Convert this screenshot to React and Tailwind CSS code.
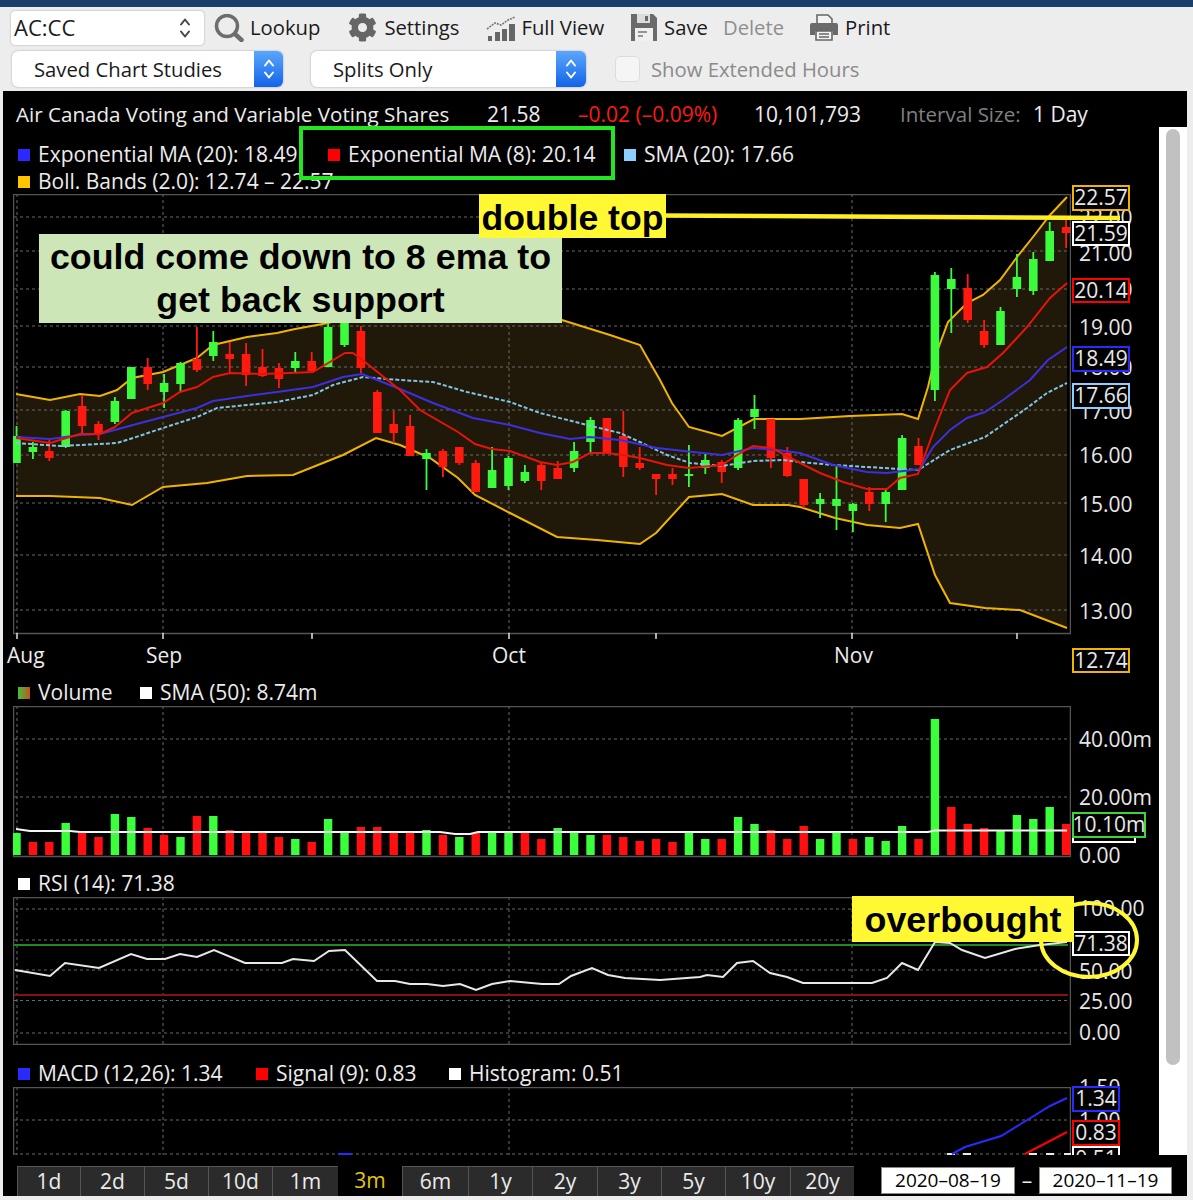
import React from 'react';
import { FaCog } from 'react-icons/fa';

const G = '#3cfb3c';
const R = '#ff1a0f';

// wick top, wick bottom, body top, body bottom, colour
const candles = [
  [426, 463, 436, 463, G], [442, 459, 447, 452, G], [440, 461, 451, 458, R], [410, 448, 411, 447, G],
  [395, 433, 406, 426, R], [421, 440, 424, 433, R], [397, 424, 401, 422, G], [367, 399, 367, 399, G],
  [358, 390, 367, 384, R], [374, 408, 383, 392, G], [362, 392, 363, 384, G], [327, 372, 359, 370, R],
  [331, 361, 342, 356, G], [342, 373, 354, 359, R], [343, 386, 354, 375, R], [349, 377, 367, 376, R],
  [363, 388, 368, 379, R], [352, 372, 361, 368, G], [352, 372, 361, 371, R], [323, 367, 327, 367, G],
  [320, 347, 323, 345, G], [326, 373, 331, 368, R], [390, 433, 392, 433, R], [411, 443, 424, 433, R],
  [415, 456, 426, 456, R], [449, 490, 453, 459, G], [449, 477, 451, 467, R], [447, 465, 447, 463, R],
  [460, 492, 463, 492, R], [447, 488, 470, 488, G], [456, 490, 458, 486, G], [465, 483, 472, 481, G],
  [463, 490, 465, 481, R], [461, 479, 468, 479, R], [442, 472, 451, 468, G], [417, 453, 420, 442, G],
  [418, 453, 418, 453, R], [411, 477, 436, 467, R], [447, 470, 463, 468, R], [474, 495, 474, 479, R],
  [468, 485, 474, 479, R], [445, 487, 474, 476, G], [454, 474, 460, 468, G], [460, 483, 462, 472, R],
  [418, 470, 420, 468, G], [395, 429, 409, 417, G], [419, 468, 419, 458, R], [447, 477, 453, 476, R],
  [479, 508, 479, 505, R], [493, 518, 499, 504, G], [465, 530, 499, 506, G], [503, 532, 504, 511, G],
  [487, 511, 492, 504, R], [490, 522, 492, 504, G], [435, 490, 438, 490, G], [438, 465, 446, 465, R],
  [272, 401, 275, 390, G], [268, 333, 279, 289, G], [274, 323, 288, 320, R], [320, 348, 331, 345, R],
  [307, 345, 311, 345, G], [254, 297, 277, 289, G], [252, 295, 259, 291, G], [222, 261, 231, 261, G],
  [220, 248, 227, 233, R],
];

const volumes = [
  [833, G], [842, R], [842, R], [823, G], [833, R], [837, R], [814, G], [817, G], [828, R], [835, R], [837, G],
  [816, R], [816, G], [830, R], [833, R], [833, R], [837, R], [839, G], [842, R], [819, G], [833, G], [827, R],
  [827, R], [833, R], [833, R], [830, G], [835, R], [837, G], [833, R], [833, G], [833, G], [833, R], [839, R],
  [828, G], [833, G], [835, G], [835, R], [837, R], [841, R], [839, R], [842, R], [833, G], [839, G], [839, R],
  [817, G], [824, G], [830, R], [839, R], [826, R], [839, G], [833, G], [839, R], [837, G], [841, G], [826, G],
  [839, R], [719, G], [807, R], [824, R], [828, R], [831, G], [815, G], [819, G], [807, G], [824, R],
];

const upperBand = '16,394 50,400 80,394 100,396 117,390 132,378 163,372 197,358 213,345 247,337 277,333 295,329 328,323 345,318 380,315 450,315 562,320 610,335 640,345 660,380 672,403 689,427 722,436 754,419 800,419 850,416 902,414 918,419 928,387 935,357 948,322 967,303 983,295 1000,280 1017,257 1033,237 1050,215 1067,197';
const lowerBand = '16,496 50,496 100,498 132,505 163,487 207,483 247,476 293,475 343,455 376,438 400,445 430,458 458,478 475,495 510,513 557,537 597,540 640,544 656,533 689,497 722,494 753,505 788,505 800,507 835,518 867,525 900,528 918,524 935,575 950,603 985,608 1020,610 1067,628';
const ema8 = '16,438 50,443 80,434 100,434 115,427 132,413 163,403 180,392 197,387 213,377 230,373 260,374 290,373 313,372 345,353 353,353 365,362 400,390 420,410 458,432 475,444 492,449 510,451 540,462 557,465 573,462 590,453 607,453 623,455 640,458 667,465 689,468 722,465 737,455 753,446 772,448 800,463 820,473 843,482 867,489 887,489 900,478 918,474 933,433 950,390 967,373 987,367 1003,353 1027,327 1050,298 1067,283';
const ema20 = '16,437 50,439 80,435 100,434 133,425 163,417 197,408 213,401 247,396 277,392 313,387 343,377 362,374 400,389 433,403 473,418 510,425 540,433 570,439 590,437 620,440 657,448 693,452 722,455 753,448 777,450 800,453 833,465 867,472 887,473 920,469 933,447 950,430 967,418 985,412 1003,400 1030,380 1048,360 1067,347';
const sma20 = '16,443 60,446 100,444 117,443 133,438 163,428 197,417 217,408 247,405 277,402 313,395 333,385 363,377 400,380 433,382 467,392 510,402 540,413 587,425 620,433 640,442 667,455 690,463 722,466 753,461 783,460 800,462 833,465 867,467 918,470 950,450 985,437 1027,408 1047,393 1067,383';
const rsi = '15,970 50,976 65,963 99,968 131,954 147,959 165,959 180,954 197,957 214,950 245,963 282,963 293,959 314,961 329,951 345,950 377,981 395,981 410,984 427,984 443,986 460,984 476,990 492,984 510,981 542,984 559,984 571,976 592,968 608,975 625,978 660,980 700,977 707,975 723,977 737,963 753,961 770,973 787,977 803,983 872,983 887,978 902,963 918,970 935,942 950,943 962,950 985,958 1015,949 1040,945 1067,942';

const candleX = (i) => 16.5 + 16.4 * i;

const tabs = [
  ['1d', 'w-[63px]'], ['2d', 'w-[64px]'], ['5d', 'w-[64px]'], ['10d', 'w-[64px]'], ['1m', 'w-[66px]'],
  ['3m', 'w-[64px]'], ['6m', 'w-[66px]'], ['1y', 'w-[64px]'], ['2y', 'w-[65px]'], ['3y', 'w-[64px]'],
  ['5y', 'w-[64px]'], ['10y', 'w-[65px]'], ['20y', 'w-[64px]'],
];

function Grid({ xs, ys, top, bottom }) {
  return (
    <g stroke="#6a6a6a" strokeWidth="1" strokeDasharray="3 3">
      {ys.map((y) => <line key={y} x1="14" x2="1070" y1={y} y2={y} />)}
      {xs.map((x) => <line key={x} x1={x} x2={x} y1={top} y2={bottom} />)}
    </g>
  );
}

function Legend({ color, className = '', children }) {
  return (
    <div className={`flex items-center gap-2 shrink-0 ${className}`}>
      <span className="w-3 h-3 shrink-0" style={{ background: color }} />
      <span>{children}</span>
    </div>
  );
}

function AxisLabel({ className, children }) {
  return <div className={`absolute left-2 leading-none -translate-y-1/2 text-[#e8e8e8] ${className}`}>{children}</div>;
}

function Tag({ className, children }) {
  return (
    <div className={`absolute left-px w-[58px] flex items-center justify-center bg-black border-2 text-[#e8e8e8] ${className}`}>
      {children}
    </div>
  );
}

function UpDown({ className }) {
  return (
    <svg viewBox="0 0 12 22" className={className} fill="none" stroke="currentColor" strokeWidth="2" strokeLinecap="round" strokeLinejoin="round">
      <path d="M2 7.5 6 2.5l4 5M2 14.5l4 5 4-5" />
    </svg>
  );
}

function SelectBox({ className, blue, children }) {
  return (
    <div className={`h-9 flex items-center justify-between bg-white rounded-md shadow-[0_0_2px_rgba(0,0,0,0.35)] overflow-hidden ${className}`}>
      <span className="pl-[22px]">{children}</span>
      <div className={`h-full flex items-center justify-center bg-gradient-to-b from-[#5aa6fb] to-[#1262e8] text-white ${blue}`}>
        <UpDown className="w-3 h-[24px]" />
      </div>
    </div>
  );
}

export default function App() {
  return (
    <div className="relative w-[1193px] h-[1200px] overflow-hidden bg-[#ededed] font-['Open_Sans',sans-serif]">
      <div className="h-[7px] bg-[#1a3f6b]" />

      {/* Toolbar */}
      <div className="h-[41px] flex items-center text-[20.25px] text-[#1a1a1a]">
        <div className="ml-[11px] w-[193px] h-[34px] flex items-center justify-between bg-white rounded-[4px] shadow-[0_0_2px_rgba(0,0,0,0.35)]">
          <span className="pl-[3px] text-[22px]">AC:CC</span>
          <UpDown className="w-3 h-[24px] mr-[13px] text-[#444]" />
        </div>
        <svg viewBox="0 0 30 28" className="ml-[10px] w-[30px] h-[28px]" fill="none" stroke="#6d6d6d">
          <circle cx="13" cy="12" r="10.5" strokeWidth="3.5" />
          <path d="M21 20l6.5 6" strokeWidth="4.5" strokeLinecap="round" />
        </svg>
        <span className="ml-[6px]">Lookup</span>
        <FaCog className="ml-[28px] text-[#666]" size={29} />
        <span className="ml-[7px]">Settings</span>
        <svg viewBox="0 0 30 26" className="ml-[27px] w-[30px] h-[26px]" fill="none">
          <path d="M1 14 9 8l6 2 7-5 7-3" stroke="#777" strokeWidth="1.6" strokeDasharray="2 1" />
          <path d="M2 26v-5h4v5zM9 26v-9h5v9zM16 26v-12h5v12zM23 26V9h6v17z" fill="#666" />
        </svg>
        <span className="ml-[5px]">Full View</span>
        <svg viewBox="0 0 28 29" className="ml-[26px] w-[28px] h-[29px]">
          <path d="M1 1h22l4 4v23H1z" fill="#6a6a6a" />
          <path d="M7 1h13v9H7z" fill="#dcdcdc" />
          <path d="M15 3h3v5h-3z" fill="#6a6a6a" />
          <path d="M5 15h18v13H5z" fill="#f0f0f0" />
          <path d="M8 19h9M8 23h5" stroke="#777" strokeWidth="1.5" />
        </svg>
        <span className="ml-[6px]">Save</span>
        <span className="ml-[15px] text-[#8f8f8f]">Delete</span>
        <svg viewBox="0 0 30 27" className="ml-[25px] w-[30px] h-[27px]">
          <path d="M8 1h11l4 4v6H8z" fill="#f2f2f2" stroke="#666" strokeWidth="1.6" />
          <path d="M1 11a2 2 0 0 1 2-2h24a2 2 0 0 1 2 2v10h-5v-4H6v4H1z" fill="#6a6a6a" />
          <path d="M7 17h16v9H7z" fill="#f2f2f2" stroke="#666" strokeWidth="1.6" />
          <path d="M10 20h10M10 23h10" stroke="#666" strokeWidth="1.4" />
        </svg>
        <span className="ml-[6px]">Print</span>
      </div>
      <div className="h-[43px] pb-px flex items-center text-[20.25px] text-[#1a1a1a]">
        <SelectBox className="ml-3 w-[271px]" blue="w-[29px]">Saved Chart Studies</SelectBox>
        <SelectBox className="ml-7 w-[275px]" blue="w-[30px]">Splits Only</SelectBox>
        <div className="ml-[29px] w-[25px] h-[26px] bg-[#f5f5f5] border border-[#dcdcdc] rounded-[5px]" />
        <span className="ml-[11px] text-[#8a8a8a]">Show Extended Hours</span>
      </div>

      {/* Chart panel */}
      <div className="ml-[3px] w-[1184px] h-[1105px] bg-black text-[21px] text-[#ececec] flex flex-col">
        <div className="h-9 shrink-0 flex items-center pl-[13px] pt-[11px]">
          <span className="w-[471px] text-[20.6px]">Air Canada Voting and Variable Voting Shares</span>
          <span className="w-[91px]">21.58</span>
          <span className="w-[176px] text-[#ff1a0f]">–0.02 (–0.09%)</span>
          <span className="w-[146px]">10,101,793</span>
          <span className="w-[133px] text-[20.5px] text-[#808080]">Interval Size:</span>
          <span>1 Day</span>
        </div>

        <div className="h-[1028px] shrink-0 flex">
          <div className="w-[1156px] shrink-0">
            {/* Price */}
            <div className="h-[553px]">
              <div className="h-[67px] pl-[15px] pt-[17px]">
                <div className="h-[22px] flex items-center">
                  <Legend color="#2a2aff" className="w-[310px]">Exponential MA (20): 18.49</Legend>
                  <Legend color="#ff0000" className="w-[296px]">Exponential MA (8): 20.14</Legend>
                  <Legend color="#8ccfff">SMA (20): 17.66</Legend>
                </div>
                <div className="h-[22px] mt-[5px] flex items-center">
                  <Legend color="#ffc400">Boll. Bands (2.0): 12.74 – 22.57</Legend>
                </div>
              </div>
              <div className="flex">
                <svg viewBox="13 194 1058 446" className="ml-[10px] w-[1058px] h-[446px] shrink-0">
                  <polygon points={`${upperBand} ${lowerBand.split(' ').reverse().join(' ')}`} fill="#201808" />
                  <Grid xs={[17, 163, 509, 852]} ys={[217, 251, 289, 326, 367, 410, 455, 503, 555, 610]} top="194" bottom="633" />
                  <rect x="13.5" y="194.5" width="1057" height="439" fill="none" stroke="#555" strokeWidth="1.5" />
                  {[17, 163, 312, 509, 656, 852, 1017].map((x) => (
                    <line key={x} x1={x} x2={x} y1="633" y2="639" stroke="#e0e0e0" strokeWidth="1.5" />
                  ))}
                  <polyline points={upperBand} fill="none" stroke="#f0b400" strokeWidth="2" />
                  <polyline points={lowerBand} fill="none" stroke="#f0b400" strokeWidth="2" />
                  {candles.map(([wt, wb, bt, bb, c], i) => (
                    <g key={i} fill={c}>
                      <rect x={candleX(i) - 0.9} y={wt} width="1.8" height={wb - wt} />
                      <rect x={candleX(i) - 4.3} y={bt} width="8.6" height={bb - bt} />
                    </g>
                  ))}
                  <polyline points={sma20} fill="none" stroke="#7fc4e6" strokeWidth="2" strokeDasharray="4 2" />
                  <polyline points={ema20} fill="none" stroke="#3b30e0" strokeWidth="2" />
                  <polyline points={ema8} fill="none" stroke="#e81408" strokeWidth="2" />
                </svg>
                <div className="relative flex-1">
                  <AxisLabel className="top-[23px]">22.00</AxisLabel>
                  <AxisLabel className="top-[59px]">21.00</AxisLabel>
                  <AxisLabel className="top-[95px]">20.00</AxisLabel>
                  <AxisLabel className="top-[133px]">19.00</AxisLabel>
                  <AxisLabel className="top-[173px]">18.00</AxisLabel>
                  <AxisLabel className="top-[217px]">17.00</AxisLabel>
                  <AxisLabel className="top-[261px]">16.00</AxisLabel>
                  <AxisLabel className="top-[310px]">15.00</AxisLabel>
                  <AxisLabel className="top-[362px]">14.00</AxisLabel>
                  <AxisLabel className="top-[417px]">13.00</AxisLabel>
                  <Tag className="-top-[9px] h-[26px] border-[#f0b400]">22.57</Tag>
                  <Tag className="top-[27px] h-[25px] border-white">21.59</Tag>
                  <Tag className="top-[84px] h-[25px] border-[#ff0000]">20.14</Tag>
                  <Tag className="top-[152px] h-[26px] border-[#2a2aff]">18.49</Tag>
                  <Tag className="top-[189px] h-[26px] border-[#8ccfff]">17.66</Tag>
                  <Tag className="top-[454px] h-[25px] border-[#f0b400]">12.74</Tag>
                </div>
              </div>
              <div className="relative h-10 -mt-px">
                <span className="absolute left-1 top-px">Aug</span>
                <span className="absolute left-[143px] top-px">Sep</span>
                <span className="absolute left-[489px] top-px">Oct</span>
                <span className="absolute left-[831px] top-px">Nov</span>
              </div>
            </div>

            {/* Volume */}
            <div className="h-[190px]">
              <div className="h-[26px] pl-[15px] flex items-center">
                <Legend className="w-[122px]" color="linear-gradient(90deg,#3cc43c,#c8501e)">Volume</Legend>
                <Legend color="#ffffff">SMA (50): 8.74m</Legend>
              </div>
              <div className="flex">
                <svg viewBox="13 706 1058 152" className="ml-[10px] w-[1058px] h-[152px] shrink-0">
                  <Grid xs={[17, 163, 509, 852]} ys={[739, 797]} top="706" bottom="856" />
                  <rect x="13.5" y="706.5" width="1057" height="150" fill="none" stroke="#555" strokeWidth="1.5" />
                  {volumes.map(([top, c], i) => (
                    <rect key={i} x={candleX(i) - 4.2} y={top} width="8.4" height={855 - top} fill={c === G ? '#3cff3c' : '#ff0f0f'} />
                  ))}
                  <polyline points="16,829 30,831 70,831 80,832 440,832 455,834 470,834 478,832 928,832 935,830.5 1067,830.5" fill="none" stroke="#f5f5f5" strokeWidth="2" />
                </svg>
                <div className="relative flex-1">
                  <AxisLabel className="top-[33px]">40.00m</AxisLabel>
                  <AxisLabel className="top-[91px]">20.00m</AxisLabel>
                  <AxisLabel className="top-[149px]">0.00</AxisLabel>
                  <div className="absolute left-px top-[124px] w-[64px] h-[13px] border-2 border-white" />
                  <Tag className="top-[106px] !w-[74px] h-[26px] border-[#3cd43c]">10.10m</Tag>
                </div>
              </div>
            </div>

            {/* RSI */}
            <div className="h-[190px]">
              <div className="h-[27px] pl-[15px] flex items-center">
                <Legend color="#ffffff">RSI (14): 71.38</Legend>
              </div>
              <div className="flex">
                <svg viewBox="13 897 1058 148" className="ml-[10px] w-[1058px] h-[148px] shrink-0">
                  <Grid xs={[17, 163, 509, 852]} ys={[909, 940, 970, 1000.5, 1033]} top="897" bottom="1044" />
                  <rect x="13.5" y="897.5" width="1057" height="147" fill="none" stroke="#555" strokeWidth="1.5" />
                  <line x1="14" x2="1068" y1="945" y2="945" stroke="#1f8a1f" strokeWidth="2" />
                  <line x1="14" x2="1068" y1="995" y2="995" stroke="#8a0f0f" strokeWidth="2" />
                  <polyline points={rsi} fill="none" stroke="#e8e8e8" strokeWidth="2" />
                </svg>
                <div className="relative flex-1">
                  <AxisLabel className="top-[11px]">100.00</AxisLabel>
                  <AxisLabel className="top-[74px]">50.00</AxisLabel>
                  <AxisLabel className="top-[104px]">25.00</AxisLabel>
                  <AxisLabel className="top-[135px]">0.00</AxisLabel>
                  <Tag className="top-[34px] h-[25px] border-white">71.38</Tag>
                </div>
              </div>
            </div>

            {/* MACD */}
            <div className="h-[95px] overflow-hidden">
              <div className="h-[27px] pl-[15px] flex items-center">
                <Legend className="w-[238px]" color="#2a2aff">MACD (12,26): 1.34</Legend>
                <Legend className="w-[193px]" color="#ff0000">Signal (9): 0.83</Legend>
                <Legend color="#ffffff">Histogram: 0.51</Legend>
              </div>
              <div className="flex">
                <svg viewBox="13 1087 1058 68" className="ml-[10px] w-[1058px] h-[68px] shrink-0">
                  <Grid xs={[17, 163, 509, 852]} ys={[1120, 1154]} top="1087" bottom="1155" />
                  <path d="M13.5 1155V1087.5H1070.5V1155" fill="none" stroke="#555" strokeWidth="1.5" />
                  <rect x="338" y="1153" width="14" height="2" fill="#2a2aff" />
                  {[951, 967, 1033, 1050, 1068].map((x) => (
                    <rect key={x} x={x - 4} y="1153" width="8" height="2" fill="#e8e8e8" />
                  ))}
                  <polyline points="952,1154 965,1147 1001,1136 1024,1122 1050,1106 1067,1098" fill="none" stroke="#2a2aff" strokeWidth="2" />
                  <polyline points="1025,1154 1067,1132" fill="none" stroke="#ff0000" strokeWidth="2" />
                </svg>
                <div className="relative flex-1">
                  <AxisLabel className="top-0">1.50</AxisLabel>
                  <AxisLabel className="top-[33px]">1.00</AxisLabel>
                  <Tag className="top-[59px] !w-[48px] h-[26px] border-white">0.51</Tag>
                  <Tag className="-top-px !w-[48px] h-[26px] border-[#2a2aff]">1.34</Tag>
                  <Tag className="top-[33px] !w-[48px] h-[26px] border-[#ff0000]">0.83</Tag>
                </div>
              </div>
            </div>
          </div>

          {/* Scrollbar */}
          <div className="w-7 shrink-0 bg-white pt-0.5 pl-[7px]">
            <div className="w-[14px] h-[936px] rounded-full bg-[#c1c1c1]" />
          </div>
        </div>

        {/* Range tabs and dates */}
        <div className="h-[41px] shrink-0 flex items-end">
          <div className="ml-[14px] h-[30px] flex">
            {tabs.map(([label, width]) => (
              <div
                key={label}
                className={`${width} flex items-center justify-center ${
                  label === '3m' ? 'bg-black text-[#e6c510]' : 'bg-[#2b2b2b] border-l border-t border-[#555] text-[#ececec]'
                }`}
              >
                {label}
              </div>
            ))}
          </div>
          <div className="ml-[27px] mb-0.5 w-[134px] h-[27px] flex items-center justify-center bg-white border border-[#888] text-[19px] text-black">2020–08–19</div>
          <span className="w-6 mb-0.5 text-center leading-[27px]">–</span>
          <div className="mb-0.5 w-[133px] h-[27px] flex items-center justify-center bg-white border border-[#888] text-[19px] text-black">2020–11–19</div>
        </div>
      </div>

      {/* Annotations drawn over the chart */}
      <svg className="absolute inset-0 w-[1193px] h-[1200px] pointer-events-none" viewBox="0 0 1193 1200" fill="none">
        <line x1="660" y1="215.5" x2="1120" y2="218" stroke="#ffee22" strokeWidth="4.5" />
        <ellipse cx="1089" cy="940" rx="48" ry="37" stroke="#fff832" strokeWidth="4" />
      </svg>
      <div className="absolute left-[299px] top-[126px] w-[316px] h-[54px] border-4 border-[#22e622]" />
      <div className="absolute left-[39px] top-[234px] w-[523px] h-[89px] flex items-center justify-center text-center bg-[#cde6b8] font-['Liberation_Sans',sans-serif] font-bold text-[35.8px] leading-[43px] text-black">
        could come down to 8 ema to<br />get back support
      </div>
      <div className="absolute left-[479px] top-[194px] w-[187px] h-11 pt-[5px] flex items-center justify-center bg-[#fff832] font-['Liberation_Sans',sans-serif] font-bold text-[35.6px] text-black">
        double top
      </div>
      <div className="absolute left-[852px] top-[896px] w-[222px] h-[46px] pt-1 flex items-center justify-center bg-[#fff832] font-['Liberation_Sans',sans-serif] font-bold text-[35.8px] text-black">
        overbought
      </div>
    </div>
  );
}
